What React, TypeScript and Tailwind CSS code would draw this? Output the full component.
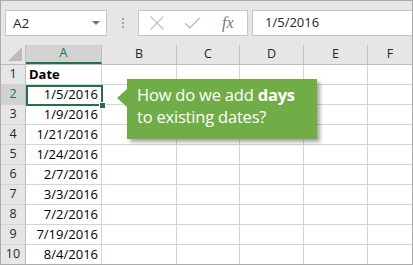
import { Check, X } from "lucide-react";

const cols = [
  { label: "A", w: "w-[76px]" },
  { label: "B", w: "w-[75px]" },
  { label: "C", w: "w-[63px]" },
  { label: "D", w: "w-[64px]" },
  { label: "E", w: "w-[64px]" },
  { label: "F", w: "flex-1" },
];

const dates = [
  "",
  "1/5/2016",
  "1/9/2016",
  "1/21/2016",
  "1/24/2016",
  "2/7/2016",
  "3/3/2016",
  "7/2/2016",
  "7/19/2016",
  "8/4/2016",
];

const App = () => {
  return (
    <div
      className="relative w-[413px] h-[265px] overflow-hidden border border-[#ababab] bg-[#e6e6e6] text-[#262626]"
      style={{ fontFamily: '"Open Sans", "Noto Sans", sans-serif' }}
    >
      {/* Formula bar */}
      <div className="flex items-center h-[44px] pl-[4px]">
        <div className="flex items-center justify-between w-[102px] h-[26px] bg-white border border-[#c6c6c6] pl-[7px] pr-[6px]">
          <span className="text-[13.5px]">A2</span>
          <span className="w-0 h-0 border-l-[4px] border-r-[4px] border-t-[4px] border-l-transparent border-r-transparent border-t-[#777]" />
        </div>
        <div className="flex flex-col gap-[2px] mx-[14px] ml-[15px]">
          <span className="w-[2px] h-[2px] bg-[#a0a0a0]" />
          <span className="w-[2px] h-[2px] bg-[#a0a0a0]" />
          <span className="w-[2px] h-[2px] bg-[#a0a0a0]" />
        </div>
        <div className="flex items-center w-[110px] h-[26px] bg-white border border-[#c6c6c6]">
          <X className="ml-[6px] w-[24px] h-[24px] text-[#c3c3c3]" strokeWidth={1.2} />
          <Check className="ml-[13px] w-[21px] h-[21px] text-[#c3c3c3]" strokeWidth={1.8} />
          <span
            className="ml-[19px] text-[16px] italic text-[#777]"
            style={{ fontFamily: '"Liberation Serif", serif' }}
          >
            fx
          </span>
        </div>
        <div className="flex items-center flex-1 h-[26px] ml-[4px] bg-white border border-[#c6c6c6] border-r-0 pl-[12px]">
          <span className="text-[13px]">1/5/2016</span>
        </div>
      </div>

      {/* Column headers */}
      <div className="flex h-[20px] border-b border-[#bdbdbd]">
        <div className="flex items-end justify-end w-[25px] border-r border-[#bdbdbd] pr-[3px] pb-[3px]">
          <svg width="14" height="14" viewBox="0 0 14 14">
            <polygon points="14,0 14,14 0,14" fill="#bcbcbc" />
          </svg>
        </div>
        {cols.map((c) => (
          <div
            key={c.label}
            className={`${c.w} flex items-center justify-center text-[12.5px] ${
              c.label === "A"
                ? "bg-[#d2d2d2] text-[#217346] border-b-2 border-[#217346] border-r border-r-[#bdbdbd]"
                : c.label === "F"
                ? ""
                : "border-r border-[#c4c4c4]"
            }`}
          >
            {c.label}
          </div>
        ))}
      </div>

      {/* Rows */}
      {dates.map((d, i) => (
        <div key={i} className="flex h-[20px]">
          <div
            className={`w-[25px] flex items-center justify-center text-[12.5px] border-r border-[#bdbdbd] border-b border-b-[#d4d4d4] ${
              i === 1 ? "bg-[#d2d2d2] text-[#217346]" : ""
            }`}
          >
            {i + 1}
          </div>
          {cols.map((c, j) => (
            <div
              key={c.label}
              className={`${c.w} flex items-center bg-white border-b border-[#d4d4d4] ${
                j < 5 ? "border-r" : ""
              } ${j === 0 ? (i === 0 ? "justify-start pl-[3px]" : "justify-end pr-[3px]") : ""}`}
            >
              {j === 0 && (
                <span className={`text-[13px] text-black ${i === 0 ? "font-bold" : ""}`}>
                  {i === 0 ? "Date" : d}
                </span>
              )}
            </div>
          ))}
        </div>
      ))}

      {/* Selection box on A2 */}
      <div className="absolute left-[25px] top-[84px] w-[77px] h-[21px] border-2 border-[#217346]" />
      <div className="absolute left-[98px] top-[101px] w-[7px] h-[7px] bg-[#217346] border border-white" />

      {/* Callout */}
      <div className="absolute left-[116px] top-[78px] flex">
        <div className="mt-[10px] w-0 h-0 border-t-[9px] border-b-[9px] border-r-[10px] border-t-transparent border-b-transparent border-r-[#70ad47]" />
        <div className="w-[190px] h-[60px] bg-[#70ad47] shadow-[3px_3px_4px_rgba(0,0,0,0.35)] pl-[10px] pt-[5px] text-white text-[16.5px] leading-[22px] tracking-[-0.2px]">
          How do we add <b>days</b>
          <br />
          to existing dates?
        </div>
      </div>
    </div>
  );
};

export default App;
